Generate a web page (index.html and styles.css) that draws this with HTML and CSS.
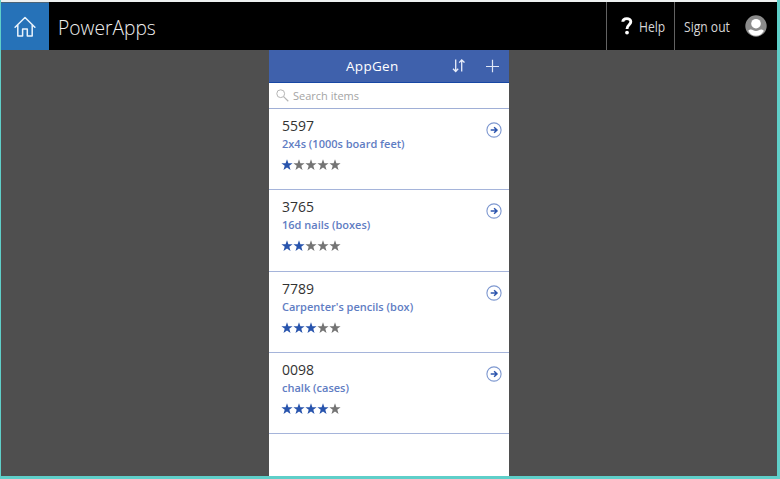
FILE: index.html
```html
<!DOCTYPE html>
<html lang="en">
<head>
<meta charset="utf-8">
<title>PowerApps</title>
<link rel="stylesheet" href="styles.css">
</head>
<body>
<svg class="defs" aria-hidden="true">
  <symbol id="star" viewBox="0 0 12 12"><path d="M6 .2 7.4 4.2H11.6L8.3 6.8 9.5 11 6 8.5 2.5 11 3.7 6.8.4 4.2H4.6Z"/></symbol>
  <symbol id="go" viewBox="0 0 16 16"><circle cx="8" cy="8" r="7.1" fill="none" stroke="#7e98d0" stroke-width="1.1"/><path d="M4.7 8H11M8.1 5.2 11 8 8.1 10.8" fill="none" stroke="#2c55ae" stroke-width="1.5"/></symbol>
</svg>
<div class="frame">
  <header class="bar">
    <a class="home"><svg width="22" height="22" viewBox="0 0 22 22"><path d="M1.1 11.3 11 1.5 20.9 11.3M3.8 9V19.9H8.6V13H13.3V19.9H18.2V9" fill="none" stroke="#e8f2fb" stroke-width="1.5" stroke-linejoin="round" stroke-linecap="round"/></svg></a>
    <h1 class="brand"><span>PowerApps</span></h1>
    <a class="help"><svg width="12" height="18" viewBox="0 0 12 18"><path d="M1.8 4.8C2 .7 9.8.4 9.8 4.8 9.8 7.8 6 7.8 6 12" fill="none" stroke="#fff" stroke-width="2.9"/><circle cx="6" cy="15.6" r="1.9" fill="#fff"/></svg><span>Help</span></a>
    <a class="account"><span>Sign out</span><svg width="22" height="22" viewBox="0 0 22 22"><circle cx="11" cy="11" r="10.7" fill="#8b8b8b"/><circle cx="11" cy="8.7" r="4.8" fill="#fff"/><path d="M3.2 15.7C5 13.8 7 14.4 8.2 15.2 9.8 16.2 12.2 16.2 13.8 15.2 15 14.4 17 13.8 18.8 15.7 17.5 18.8 14.4 20.8 11 20.8S4.5 18.8 3.2 15.7Z" fill="#fff"/></svg></a>
  </header>
  <main class="stage">
    <section class="app">
      <div class="titlebar">
        <h2 class="title">AppGen</h2>
        <svg class="sort" width="14" height="14" viewBox="0 0 14 14"><path d="M3.7.6V12.4M1 9.8 3.7 12.5 6.2 9.8M9.7 12.6V1M7.2 3.6 9.7 1 12.5 3.6" fill="none" stroke="#e9eefa" stroke-width="1.3"/></svg>
        <svg class="add" width="14" height="14" viewBox="0 0 14 14"><path d="M7.5 .8V13.2M1 7.5H14" stroke="#dfe6f6" stroke-width="1.2"/></svg>
      </div>
      <div class="search"><svg width="13" height="13" viewBox="0 0 13 13"><circle cx="4.7" cy="4.7" r="3.9" fill="none" stroke="#b5b5b5"/><path d="M7.6 7.6 12.3 12.2" stroke="#b5b5b5" stroke-width="1.2"/></svg><span>Search items</span></div>
      <ul class="items">
        <li class="item"><div class="info"><div class="code">5597</div><div class="name">2x4s (1000s board feet)</div><div class="stars r1"><svg><use href="#star"/></svg><svg><use href="#star"/></svg><svg><use href="#star"/></svg><svg><use href="#star"/></svg><svg><use href="#star"/></svg></div></div><svg class="go"><use href="#go"/></svg></li>
        <li class="item"><div class="info"><div class="code">3765</div><div class="name">16d nails (boxes)</div><div class="stars r2"><svg><use href="#star"/></svg><svg><use href="#star"/></svg><svg><use href="#star"/></svg><svg><use href="#star"/></svg><svg><use href="#star"/></svg></div></div><svg class="go"><use href="#go"/></svg></li>
        <li class="item"><div class="info"><div class="code">7789</div><div class="name">Carpenter's pencils (box)</div><div class="stars r3"><svg><use href="#star"/></svg><svg><use href="#star"/></svg><svg><use href="#star"/></svg><svg><use href="#star"/></svg><svg><use href="#star"/></svg></div></div><svg class="go"><use href="#go"/></svg></li>
        <li class="item"><div class="info"><div class="code">0098</div><div class="name">chalk (cases)</div><div class="stars r4"><svg><use href="#star"/></svg><svg><use href="#star"/></svg><svg><use href="#star"/></svg><svg><use href="#star"/></svg><svg><use href="#star"/></svg></div></div><svg class="go"><use href="#go"/></svg></li>
      </ul>
    </section>
  </main>
</div>
</body>
</html>
```
FILE: styles.css
```css
* { box-sizing: border-box; }
body { margin: 0; font-family: "Open Sans", "Noto Sans", sans-serif; }
h1, h2, ul { margin: 0; padding: 0; font-weight: 400; list-style: none; }
svg { display: block; flex: none; }
.defs { position: absolute; width: 0; height: 0; }
.frame { width: 780px; height: 479px; display: flex; flex-direction: column; border: solid #5fcfc9; border-width: 0 3px 3px 1px; overflow: hidden; background: #4f4f4f; }
.bar { height: 50px; flex: none; display: flex; background: #000; border-top: 2px solid #eef1f1; color: #d6d6d6; }
.home { width: 48px; background: #2672b8; display: flex; align-items: center; justify-content: center; border-top: 1px solid #4b6478; }
.brand { flex: 1; padding-left: 9px; font-size: 21px; line-height: 50px; font-weight: 300; color: #f0f0f0; }
.brand span { display: inline-block; transform: scaleX(.915); transform-origin: 0 50%; }
.help, .account { display: flex; align-items: center; border-left: 1px solid #626262; font-size: 14px; }
.help { width: 68px; padding-left: 14px; gap: 6px; }
.help span, .account span { display: inline-block; transform: scaleX(.865); transform-origin: 0 50%; line-height: 20px; padding-top: 1px; white-space: nowrap; }
.account { width: 103px; padding: 0 10px 0 9px; justify-content: space-between; }
.stage { flex: 1; display: flex; justify-content: center; }
.app { width: 240px; background: #fff; }
.titlebar { height: 33px; background: #3f61ac; border-bottom: 1px solid #1747a4; display: flex; align-items: center; color: #fff; padding-right: 10px; }
.title { flex: 1; padding-left: 77px; font-size: 13.5px; letter-spacing: .3px; line-height: 30px; }
.sort { margin-top: -1px; }
.add { margin-left: 19px; }
.search { height: 26px; border-bottom: 1px solid #a0afd6; display: flex; align-items: center; gap: 4px; padding-left: 7px; font-size: 11px; color: #a4a4a4; }
.search span { margin-top: -1px; }
.item { height: 81.3px; border-bottom: 1px solid #a5b4da; display: flex; justify-content: space-between; padding: 7px 7px 0 13px; }
.code { font-size: 14px; line-height: 20px; color: #333; }
.name { font-size: 11px; line-height: 15px; font-weight: 600; color: #5f7dc3; white-space: nowrap; }
.stars { display: flex; margin: 8px 0 0 -1px; }
.stars svg { width: 12px; height: 12px; fill: #747474; }
.r1 svg:nth-child(-n+1), .r2 svg:nth-child(-n+2), .r3 svg:nth-child(-n+3), .r4 svg:nth-child(-n+4) { fill: #2854ad; }
.go { width: 16px; height: 16px; margin-top: 6px; }
```
